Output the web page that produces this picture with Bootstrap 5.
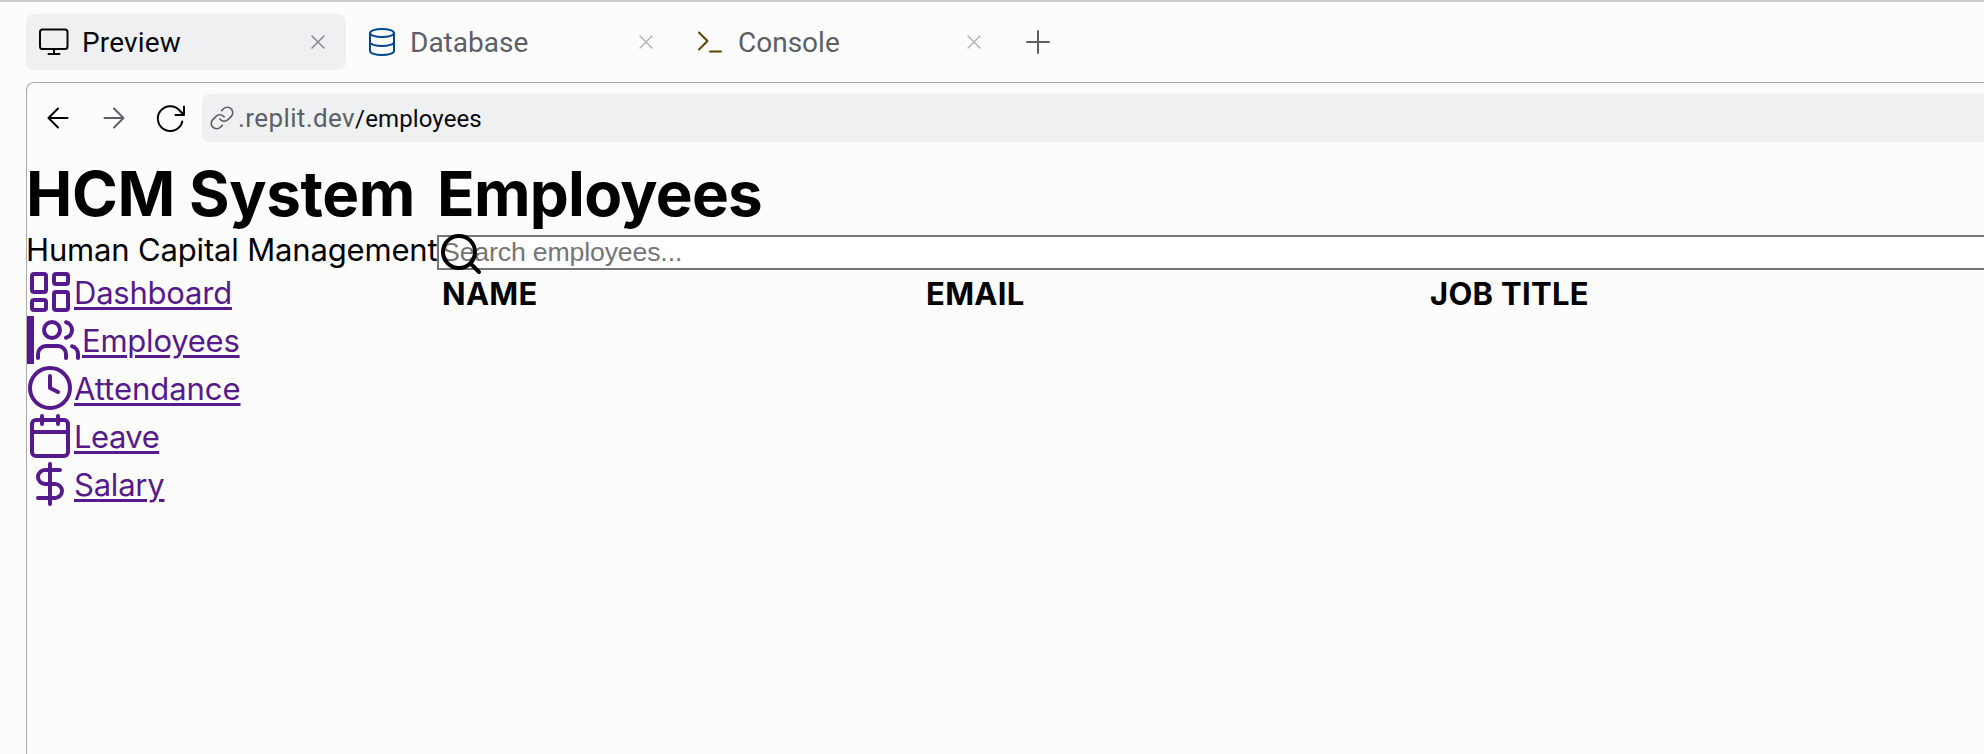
<!DOCTYPE html>
<html lang="en">
<head>
<meta charset="utf-8">
<title>HCM System</title>
<link href="https://cdn.jsdelivr.net/npm/bootstrap@5.3.0/dist/css/bootstrap.min.css" rel="stylesheet">
<style>
  body { background: #fcfcfc; color: #000; height: 754px; overflow: hidden; font-family: Inter, "Liberation Sans", sans-serif; border-top: 2px solid #ccc; }
  svg { fill: none; stroke: currentColor; stroke-linecap: round; stroke-linejoin: round; flex: none; display: block; }
  .tab-strip { height: 80px; padding: 12px 0 0 26px; gap: 8px; font: 28px/57px Roboto, sans-serif; color: #5c5f66; }
  .tab-item { width: 320px; height: 56px; border-radius: 8px; padding: 0 20px 0 12px; }
  .tab-item.active { background: #eff0f2; color: #07080a; }
  .tab-item.active .tab-name { letter-spacing: .15px; }
  .tab-name { margin-left: 12px; }
  .icon-db { color: #00468c; }
  .icon-console { color: #5c4400; }
  .tab-item .close-x { margin-left: auto; color: #b3b4b6; }
  .tab-item.active .close-x { color: #87888b; }
  .pane { margin-left: 26px; height: 672px; border: solid #aaa; border-width: 1px 0 0 1px; border-top-left-radius: 8px; }
  .browser-bar { height: 70px; font-family: Roboto, sans-serif; padding-left: 15px; }
  .browser-bar .tool { width: 32px; margin-right: 24px; }
  .address { height: 48px; background: #eff0f2; border-radius: 8px 0 0 8px; padding-left: 7px; color: #5c5f66; font-size: 26px; }
  .host { margin-left: 3px; letter-spacing: .4px; }
  .route { font-size: 24px; color: #07080a; letter-spacing: .12px; }
  .sidebar { width: 410px; flex: none; }
  .page-title { font-size: 62px; line-height: 82px; height: 76px; font-weight: 700; margin: 0; white-space: nowrap; letter-spacing: -.75px; }
  .sidebar .page-title, .tagline { margin-left: -1px; letter-spacing: -.4px; }
  .sidebar .tagline { font-size: 31px; line-height: 42px; height: 39px; margin-bottom: 0; white-space: nowrap; letter-spacing: -.16px; }
  .side-link { height: 48px; margin-left: -1px; color: #551a8b; font-size: 31px; line-height: 50px; letter-spacing: -.22px; text-decoration: underline; text-decoration-thickness: 3px; text-underline-offset: 3px; }
  .side-link:hover { color: #551a8b; }
  .side-link.current::before { content: ""; width: 7px; margin-left: 1px; height: 48px; background: #551a8b; }
  .side-link span { height: 48px; white-space: nowrap; }
  .side-link.wide { letter-spacing: -.04px; }
  .side-link.tight { letter-spacing: -.5px; }
  .search-box { height: 35px; border: 2px solid #767676; border-right: 0; background: #fff; margin-top: 6px; }
  .search-box input { border: 0; padding: 0 3px; height: 31px; font: 26.667px/31px "Liberation Sans", sans-serif; letter-spacing: -.15px; background: transparent; }
  .search-box input::placeholder { color: #757575; opacity: 1; }
  .search-box svg { position: absolute; left: -2px; top: -7px; }
  .heads { font-size: 31px; font-weight: 700; line-height: 48px; height: 48px; padding-left: 5px; white-space: nowrap; letter-spacing: .3px; }
</style>
</head>
<body>
<div class="tab-strip d-flex">
  <div class="tab-item active d-flex align-items-center">
    <svg width="32" height="32" viewBox="0 0 32 32" stroke-width="2"><rect x="2" y="3.5" width="27.5" height="19.5" rx="2.5"/><path d="M16 23v5M10.5 28h11"/></svg>
    <span class="tab-name">Preview</span>
    <svg class="close-x" width="16" height="16" viewBox="0 0 16 16" stroke-width="1.5"><path d="M2 2l12 12M14 2L2 14"/></svg>
  </div>
  <div class="tab-item d-flex align-items-center">
    <svg class="icon-db" width="32" height="32" viewBox="0 0 32 32" stroke-width="2"><ellipse cx="16" cy="7" rx="12" ry="4"/><path d="M4 7v18c0 2.2 5.4 4 12 4s12-1.800 12-4V7M4 16c0 2.200 5.400 4 12 4s12-1.800 12-4"/></svg>
    <span class="tab-name">Database</span>
    <svg class="close-x" width="16" height="16" viewBox="0 0 16 16" stroke-width="1.5"><path d="M2 2l12 12M14 2L2 14"/></svg>
  </div>
  <div class="tab-item d-flex align-items-center">
    <svg class="icon-console" width="32" height="32" viewBox="0 0 32 32" stroke-width="2"><path d="M5 6.500l8.500 8.500L5 23.500M16 25.500h11"/></svg>
    <span class="tab-name">Console</span>
    <svg class="close-x" width="16" height="16" viewBox="0 0 16 16" stroke-width="1.5"><path d="M2 2l12 12M14 2L2 14"/></svg>
  </div>
  <svg class="align-self-start mt-3 ms-3" width="24" height="24" viewBox="0 0 24 24" stroke-width="2"><path d="M12 1v22M1 12h22"/></svg>
</div>

<div class="pane">
  <div class="browser-bar d-flex align-items-center">
    <svg class="tool" width="32" height="32" viewBox="0 0 32 32" stroke-width="2"><path d="M25.500 16h-19M16 6.500L6.500 16l9.500 9.500"/></svg>
    <svg class="tool" width="32" height="32" viewBox="0 0 32 32" stroke-width="2" color="#5c5f66"><path d="M6.500 16h19M16 6.500l9.500 9.500-9.500 9.500"/></svg>
    <svg class="tool me-3" width="32" height="32" viewBox="0 0 32 32" stroke-width="2"><path d="M30 4.500v8.500h-8.500M30 13l-4.200-4.300A12.400 12.400 0 1 0 28.300 19.500"/></svg>
    <div class="address d-flex align-items-center flex-grow-1">
      <svg width="26" height="26" viewBox="0 0 24 24" stroke-width="1.500"><path d="M10 13a5 5 0 0 0 7.540.540l3-3a5 5 0 0 0-7.070-7.070l-1.720 1.710"/><path d="M14 11a5 5 0 0 0-7.540-.540l-3 3a5 5 0 0 0 7.070 7.070l1.710-1.710"/></svg>
      <div><span class="host">.replit.dev</span><span class="route">/employees</span></div>
    </div>
  </div>

  <div class="d-flex">
    <div class="sidebar">
      <h1 class="page-title">HCM System</h1>
      <p class="tagline">Human Capital Management</p>
      <nav class="d-flex flex-column">
        <a class="side-link d-flex" href="#"><svg width="48" height="48" viewBox="0 0 24 24" stroke-width="2"><rect x="3" y="3" width="7" height="9" rx="1"/><rect x="14" y="3" width="7" height="5" rx="1"/><rect x="14" y="12" width="7" height="9" rx="1"/><rect x="3" y="16" width="7" height="5" rx="1"/></svg><span>Dashboard</span></a>
        <a class="side-link current d-flex" href="#"><svg width="48" height="48" viewBox="0 0 24 24" stroke-width="2"><path d="M16 21v-2a4 4 0 0 0-4-4H6a4 4 0 0 0-4 4v2"/><circle cx="9" cy="7" r="4"/><path d="M22 21v-2a4 4 0 0 0-3-3.870M16 3.130a4 4 0 0 1 0 7.750"/></svg><span>Employees</span></a>
        <a class="side-link wide d-flex" href="#"><svg width="48" height="48" viewBox="0 0 24 24" stroke-width="2"><circle cx="12" cy="12" r="10"/><path d="M12 6v6l4 2"/></svg><span>Attendance</span></a>
        <a class="side-link tight d-flex" href="#"><svg width="48" height="48" viewBox="0 0 24 24" stroke-width="2"><path d="M8 2v4M16 2v4M3 10h18"/><rect x="3" y="4" width="18" height="18" rx="2"/></svg><span>Leave</span></a>
        <a class="side-link d-flex" href="#"><svg width="48" height="48" viewBox="0 0 24 24" stroke-width="2"><path d="M12 2v20M17 5H9.500a3.500 3.500 0 0 0 0 7h5a3.500 3.500 0 0 1 0 7H6"/></svg><span>Salary</span></a>
      </nav>
    </div>
    <main class="flex-grow-1">
      <h1 class="page-title">Employees</h1>
      <div class="search-box position-relative">
        <input class="w-100 d-block" type="text" placeholder="Search employees...">
        <svg width="48" height="48" viewBox="0 0 24 24" stroke-width="2"><circle cx="11" cy="11" r="8"/><path d="M21 21l-4.300-4.300"/></svg>
      </div>
      <div class="heads d-flex"><div style="width:484px">NAME</div><div style="width:504px">EMAIL</div><div>JOB TITLE</div></div>
    </main>
  </div>
</div>
<script src="https://cdn.jsdelivr.net/npm/bootstrap@5.3.0/dist/js/bootstrap.bundle.min.js"></script>
</body>
</html>
